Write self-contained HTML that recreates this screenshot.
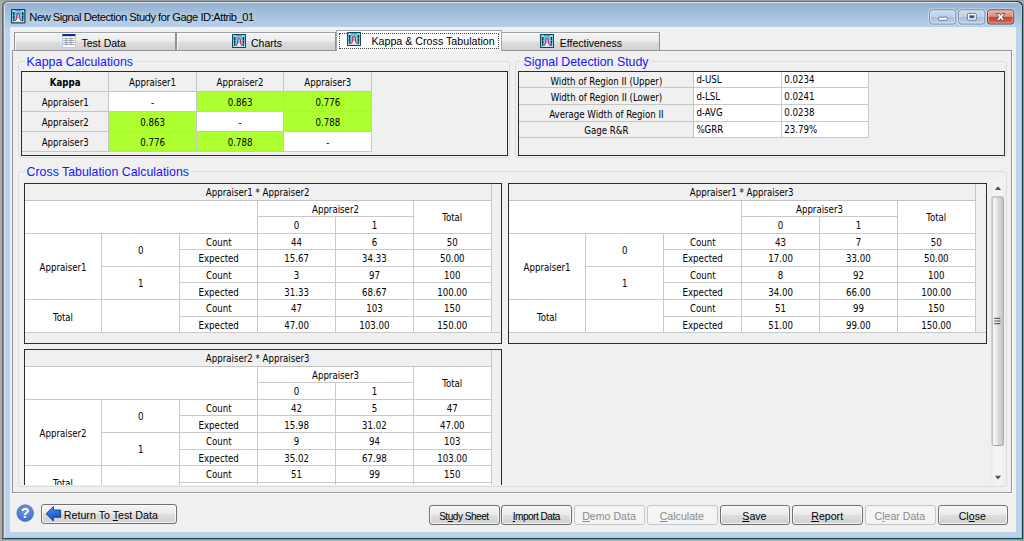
<!DOCTYPE html>
<html lang="en"><head><meta charset="utf-8"><title>New Signal Detection Study</title>
<style>
html,body{margin:0;padding:0;}
body{width:1024px;height:541px;overflow:hidden;background:#acacac;position:relative;font-family:"Liberation Sans",Arial,sans-serif;font-size:10.6px;color:#000;}
.abs{position:absolute;}
#topsh{position:absolute;left:0;top:0;width:1024px;height:1px;background:#a0a0a0;}
#botsh{position:absolute;left:2px;top:539px;width:1022px;height:1px;background:#918e8e;}
#rsh{position:absolute;left:1023px;top:4px;width:1px;height:536px;background:#999797;}
#frame{position:absolute;left:2px;top:1px;width:1021px;height:538px;background:linear-gradient(90deg,#696967 0,#6b6b6b 90%,#4a5558 97%,#15383f 100%);border-radius:5.5px 5.5px 0 0;}
#frameb{position:absolute;left:2px;top:538px;width:1021px;height:1px;background:linear-gradient(90deg,#3a5558 0,#0f4a52 8px,#0f4a52 100%);}
#framel{position:absolute;left:3px;top:5px;width:1px;height:533px;background:#878a90;}
#frame2{position:absolute;left:4px;top:2px;width:1017px;height:536px;border-radius:4.2px 4.2px 0 0;background:linear-gradient(#d8e4f2,#d7e6f6 4px,#d7e6f6);}
#cyanr{position:absolute;left:1021px;top:5px;width:1px;height:533px;background:linear-gradient(#a9d9f2,#86d9f4 24px,#7fd9f5 100%);}
#cyanb{position:absolute;left:3px;top:537px;width:1019px;height:1px;background:#80daf1;}
#frame3{position:absolute;left:5px;top:3px;width:1016px;height:534px;border-radius:3.2px 3.2px 0 0;background:linear-gradient(#94b1d1 0px,#b6cfe9 23.5px,#bcd2eb 26px,#bcd2eb 100%);}
#client{position:absolute;left:10px;top:27px;width:1006px;height:505px;background:#f0f0f0;}
#title{position:absolute;left:29.3px;top:9.7px;font-size:11.2px;white-space:nowrap;letter-spacing:-0.48px;color:#000;line-height:15px;text-shadow:0 0 5px rgba(255,255,255,.55),0 0 9px rgba(255,255,255,.35);}
.cbtn{position:absolute;top:9.3px;height:15.7px;border-radius:3px;box-sizing:border-box;border:1px solid #6f829b;box-shadow:inset 0 0 0 1px rgba(255,255,255,.45);}
.cbtn.n{background:linear-gradient(#c5d8ee 0,#bdd2ea 48%,#a9c2e0 52%,#b6cde8 100%);}
.cbtn.x{background:linear-gradient(#e7a99b 0,#d98a78 45%,#c6452a 52%,#d0644a 100%);border-color:#6b3a3a;}
/* tabs */
.tab{position:absolute;top:32.3px;height:18.2px;box-sizing:border-box;border:1px solid #909298;border-top-color:#9fa1a6;border-bottom:none;box-shadow:inset 1px 1px 0 rgba(255,255,255,.75);background:linear-gradient(#f3f3f3 0,#ececec 48%,#dddddd 52%,#d1d1d1 100%);white-space:nowrap;}
.tab.sel{top:30.4px;height:21px;background:linear-gradient(#fff 0,#fff 75%,#f3f3f3 100%);border-color:#a2a4a9;z-index:3;box-shadow:none;}
.tab .lbl{position:absolute;top:3.3px;line-height:13px;font-size:10.5px;}
#panel{position:absolute;left:12.4px;top:50.2px;width:999.6px;height:442.9px;box-sizing:border-box;border:1px solid #95979d;background:#f0f0f0;z-index:2;box-shadow:1px 1px 0 #fff;}
.gb{position:absolute;box-sizing:border-box;border:1px solid #d9dee3;border-radius:3px;z-index:4;}
.gbt{position:absolute;z-index:5;background:#f0f0f0;color:#1515ff;font-size:12.35px;line-height:14px;white-space:nowrap;padding:0 2px;}
.grid{position:absolute;box-sizing:border-box;border:1px solid #2b2b2b;background:#f0f0f0;z-index:6;overflow:hidden;}
.c{position:absolute;box-sizing:border-box;border-right:1px solid #c9c9c9;border-bottom:1px solid #c9c9c9;background:#fff;font-family:"DejaVu Sans Condensed","Liberation Sans",sans-serif;font-size:9.6px;text-align:center;white-space:nowrap;overflow:hidden;display:flex;align-items:center;justify-content:center;}
.c.h{background:#f0f0f0;border-color:#c4c4c4;}
.c.g{background:#adff2f;}
.c.l{justify-content:flex-start;padding-left:2px;}
.c span{position:relative;}
.btn{position:absolute;top:504.6px;height:20px;box-sizing:border-box;border:1px solid #707070;border-radius:3px;background:linear-gradient(#f4f4f4 0,#ebebeb 48%,#dedede 52%,#d0d0d0 100%);box-shadow:inset 0 0 0 1px rgba(255,255,255,.7);text-align:center;line-height:21.4px;font-size:10.6px;padding-right:1px;white-space:nowrap;z-index:6;}
.btn.dis{border-color:#c3c7cb;background:#f4f4f4;color:#8a8a8a;box-shadow:none;}
.btn.nar{font-size:10.1px;letter-spacing:-0.5px;}
u{text-decoration:underline;text-underline-offset:1px;}
</style></head>
<body>
<div id="topsh"></div><div id="botsh"></div><div id="rsh"></div><div id="frame"></div><div id="frameb"></div><div id="framel"></div><div id="frame2"></div><div id="cyanr"></div><div id="cyanb"></div><div id="frame3"></div>
<svg class="abs" style="left:11.1px;top:9.3px;z-index:7" width="14.5" height="14.5" viewBox="0 0 16 16">
<defs><linearGradient id="ig" x1="0" y1="0" x2="0" y2="1"><stop offset="0" stop-color="#4fbdf2"/><stop offset="0.55" stop-color="#7fd4fb"/><stop offset="1" stop-color="#c4ecff"/></linearGradient></defs>
<rect x="0.65" y="0.65" width="14.7" height="14.7" rx="0.5" fill="url(#ig)" stroke="#0b4954" stroke-width="1.3"/>
<rect x="2.4" y="2.6" width="1.5" height="11.4" fill="#062f38"/><rect x="12.1" y="2.6" width="1.5" height="11.4" fill="#062f38"/>
<rect x="1.7" y="1.7" width="2.9" height="1.3" fill="#fff"/><rect x="11.4" y="1.7" width="2.9" height="1.3" fill="#fff"/>
<rect x="1.7" y="13.4" width="2.9" height="1" fill="#d4f0fb"/><rect x="11.4" y="13.4" width="2.9" height="1" fill="#d4f0fb"/>
<path d="M1.4 7.2H14.6M1.4 11.4H14.6" stroke="#e6f7ff" stroke-width="0.8" stroke-dasharray="1.1 1.1" opacity="0.75"/><ellipse cx="8" cy="12" rx="3.2" ry="1.6" fill="#e9f8ff" opacity="0.8"/>
<path d="M4 12.8 C5.5 12.3 6.2 11.2 6.3 9.4 L6.3 7.1 C6.3 5.2 7.1 4.8 7.9 4.8 C8.7 4.8 9.5 5.2 9.5 7.1 L9.5 9.4 C9.6 11.2 10.3 12.3 11.9 12.8" fill="none" stroke="#d32630" stroke-width="1.25"/>
</svg>
<div id="title">New Signal Detection Study for Gage ID:Attrib_01</div>
<svg class="abs" style="left:924px;top:4px;z-index:7" width="96" height="26" viewBox="924 4 96 26">
<defs>
<linearGradient id="cbn" x1="0" y1="0" x2="0" y2="1"><stop offset="0" stop-color="#c9daef"/><stop offset="0.47" stop-color="#bfd3ea"/><stop offset="0.53" stop-color="#a7c0de"/><stop offset="1" stop-color="#bcd2ea"/></linearGradient>
<linearGradient id="cbx" x1="0" y1="0" x2="0" y2="1"><stop offset="0" stop-color="#e9b0a3"/><stop offset="0.46" stop-color="#dc8d7b"/><stop offset="0.54" stop-color="#c4442a"/><stop offset="1" stop-color="#d2705a"/></linearGradient>
</defs>
<g fill="none" stroke="#d5e3f3" stroke-width="1" opacity="0.8"><rect x="928.6" y="8.9" width="28.1" height="16.1" rx="3.4"/><rect x="957.7" y="8.9" width="28.1" height="16.1" rx="3.4"/><rect x="986.5" y="8.9" width="28.3" height="16.1" rx="3.4"/></g>
<rect x="929.6" y="9.9" width="26.1" height="14.1" rx="2.6" fill="url(#cbn)" stroke="#7b8ca6" stroke-width="1"/>
<rect x="958.7" y="9.9" width="26.1" height="14.1" rx="2.6" fill="url(#cbn)" stroke="#7b8ca6" stroke-width="1"/>
<rect x="987.5" y="9.9" width="26.3" height="14.1" rx="2.6" fill="url(#cbx)" stroke="#6d3f4c" stroke-width="1"/>
<g fill="none" stroke="#ffffff" stroke-opacity="0.45" stroke-width="0.9"><rect x="930.6" y="10.9" width="24.1" height="12.1" rx="1.8"/><rect x="959.7" y="10.9" width="24.1" height="12.1" rx="1.8"/><rect x="988.5" y="10.9" width="24.3" height="12.1" rx="1.8"/></g>
<rect x="938.6" y="17.1" width="8.7" height="3.3" rx="0.8" fill="#fbfbfb" stroke="#555e70" stroke-width="0.8"/>
<rect x="967.4" y="13.4" width="8.9" height="6.8" rx="0.9" fill="#fbfbfb" stroke="#555e70" stroke-width="0.8"/>
<rect x="969.7" y="15.5" width="4.4" height="2.5" fill="#3c4f74" stroke="#6b7890" stroke-width="0.5"/>
<path d="M996.3 13.4 L999.3 13.4 L1000.6 15.3 L1001.9 13.4 L1004.9 13.4 L1002.3 16.9 L1004.9 20.4 L1001.9 20.4 L1000.6 18.5 L999.3 20.4 L996.3 20.4 L998.9 16.9 Z" fill="#fbfbfb" stroke="#5a3d44" stroke-width="0.8" stroke-linejoin="round"/>
</svg>
<div id="client"></div>
<div class="tab" style="left:14.2px;width:161.4px"><svg class="abs" style="left:47px;top:1px" width="13.8" height="13.8" viewBox="0 0 14 14">
<rect x="0.4" y="0.4" width="13.2" height="13.2" fill="#fff" stroke="#b8c4e6" stroke-width="0.8"/>
<rect x="0.4" y="0" width="13.2" height="2.2" fill="#0a2da0"/>
<path d="M1.2 4.7H12.8M1.2 6.7H12.8M1.2 8.7H12.8M1.2 10.6H12.8" stroke="#9c9c9c" stroke-width="0.9"/>
<path d="M4.4 3.8V11.4M8.9 3.8V11.4" stroke="#8a8fb0" stroke-width="1.6" opacity="0.55"/>
</svg><span class="lbl" style="left:66.3px">Test Data</span></div>
<div class="tab" style="left:176px;width:160.4px"><svg class="abs" style="left:55px;top:0.9px;z-index:1" width="14.2" height="14.2" viewBox="0 0 16 16">
<defs><linearGradient id="ig" x1="0" y1="0" x2="0" y2="1"><stop offset="0" stop-color="#4fbdf2"/><stop offset="0.55" stop-color="#7fd4fb"/><stop offset="1" stop-color="#c4ecff"/></linearGradient></defs>
<rect x="0.65" y="0.65" width="14.7" height="14.7" rx="0.5" fill="url(#ig)" stroke="#0b4954" stroke-width="1.3"/>
<rect x="2.4" y="2.6" width="1.5" height="11.4" fill="#062f38"/><rect x="12.1" y="2.6" width="1.5" height="11.4" fill="#062f38"/>
<rect x="1.7" y="1.7" width="2.9" height="1.3" fill="#fff"/><rect x="11.4" y="1.7" width="2.9" height="1.3" fill="#fff"/>
<rect x="1.7" y="13.4" width="2.9" height="1" fill="#d4f0fb"/><rect x="11.4" y="13.4" width="2.9" height="1" fill="#d4f0fb"/>
<path d="M1.4 7.2H14.6M1.4 11.4H14.6" stroke="#e6f7ff" stroke-width="0.8" stroke-dasharray="1.1 1.1" opacity="0.75"/><ellipse cx="8" cy="12" rx="3.2" ry="1.6" fill="#e9f8ff" opacity="0.8"/>
<path d="M4 12.8 C5.5 12.3 6.2 11.2 6.3 9.4 L6.3 7.1 C6.3 5.2 7.1 4.8 7.9 4.8 C8.7 4.8 9.5 5.2 9.5 7.1 L9.5 9.4 C9.6 11.2 10.3 12.3 11.9 12.8" fill="none" stroke="#d32630" stroke-width="1.25"/>
</svg><span class="lbl" style="left:74px">Charts</span></div>
<div class="tab" style="left:499.6px;width:160.4px"><svg class="abs" style="left:39.4px;top:0.9px;z-index:1" width="14.2" height="14.2" viewBox="0 0 16 16">
<defs><linearGradient id="ig" x1="0" y1="0" x2="0" y2="1"><stop offset="0" stop-color="#4fbdf2"/><stop offset="0.55" stop-color="#7fd4fb"/><stop offset="1" stop-color="#c4ecff"/></linearGradient></defs>
<rect x="0.65" y="0.65" width="14.7" height="14.7" rx="0.5" fill="url(#ig)" stroke="#0b4954" stroke-width="1.3"/>
<rect x="2.4" y="2.6" width="1.5" height="11.4" fill="#062f38"/><rect x="12.1" y="2.6" width="1.5" height="11.4" fill="#062f38"/>
<rect x="1.7" y="1.7" width="2.9" height="1.3" fill="#fff"/><rect x="11.4" y="1.7" width="2.9" height="1.3" fill="#fff"/>
<rect x="1.7" y="13.4" width="2.9" height="1" fill="#d4f0fb"/><rect x="11.4" y="13.4" width="2.9" height="1" fill="#d4f0fb"/>
<path d="M1.4 7.2H14.6M1.4 11.4H14.6" stroke="#e6f7ff" stroke-width="0.8" stroke-dasharray="1.1 1.1" opacity="0.75"/><ellipse cx="8" cy="12" rx="3.2" ry="1.6" fill="#e9f8ff" opacity="0.8"/>
<path d="M4 12.8 C5.5 12.3 6.2 11.2 6.3 9.4 L6.3 7.1 C6.3 5.2 7.1 4.8 7.9 4.8 C8.7 4.8 9.5 5.2 9.5 7.1 L9.5 9.4 C9.6 11.2 10.3 12.3 11.9 12.8" fill="none" stroke="#d32630" stroke-width="1.25"/>
</svg><span class="lbl" style="left:59.2px">Effectiveness</span></div>
<div class="tab sel" style="left:336.2px;width:165.4px"><svg class="abs" style="left:9.7px;top:0.7px;z-index:1" width="14.2" height="14.2" viewBox="0 0 16 16">
<defs><linearGradient id="ig" x1="0" y1="0" x2="0" y2="1"><stop offset="0" stop-color="#4fbdf2"/><stop offset="0.55" stop-color="#7fd4fb"/><stop offset="1" stop-color="#c4ecff"/></linearGradient></defs>
<rect x="0.65" y="0.65" width="14.7" height="14.7" rx="0.5" fill="url(#ig)" stroke="#0b4954" stroke-width="1.3"/>
<rect x="2.4" y="2.6" width="1.5" height="11.4" fill="#062f38"/><rect x="12.1" y="2.6" width="1.5" height="11.4" fill="#062f38"/>
<rect x="1.7" y="1.7" width="2.9" height="1.3" fill="#fff"/><rect x="11.4" y="1.7" width="2.9" height="1.3" fill="#fff"/>
<rect x="1.7" y="13.4" width="2.9" height="1" fill="#d4f0fb"/><rect x="11.4" y="13.4" width="2.9" height="1" fill="#d4f0fb"/>
<path d="M1.4 7.2H14.6M1.4 11.4H14.6" stroke="#e6f7ff" stroke-width="0.8" stroke-dasharray="1.1 1.1" opacity="0.75"/><ellipse cx="8" cy="12" rx="3.2" ry="1.6" fill="#e9f8ff" opacity="0.8"/>
<path d="M4 12.8 C5.5 12.3 6.2 11.2 6.3 9.4 L6.3 7.1 C6.3 5.2 7.1 4.8 7.9 4.8 C8.7 4.8 9.5 5.2 9.5 7.1 L9.5 9.4 C9.6 11.2 10.3 12.3 11.9 12.8" fill="none" stroke="#d32630" stroke-width="1.25"/>
</svg><span class="lbl" style="left:34.2px;top:3.6px;font-size:10.7px">Kappa &amp; Cross Tabulation</span><div class="abs" style="left:1.4px;top:1.9px;width:160px;height:16.2px;border:1px dotted #444;box-sizing:border-box"></div></div>
<div id="panel"></div>
<div class="gb" style="left:18.4px;top:61px;width:491.2px;height:96.6px"></div>
<div class="gbt" style="left:24.6px;top:55.2px">Kappa Calculations</div>
<div class="gb" style="left:515.3px;top:61px;width:491.6px;height:96.6px"></div>
<div class="gbt" style="left:521.6px;top:55.2px">Signal Detection Study</div>
<div class="gb" style="left:18.4px;top:170.6px;width:988.5px;height:316px"></div>
<div class="gbt" style="left:24.6px;top:164.8px">Cross Tabulation Calculations</div>
<div class="grid" style="left:21.0px;top:71.3px;width:486.9px;height:84.3px">
<div class="c h" style="left:0.00px;top:0.20px;width:87.40px;height:19.50px"><span style="top:1.1px"><b>Kappa</b></span></div>
<div class="c h" style="left:87.40px;top:0.20px;width:87.40px;height:19.50px"><span style="top:1.1px">Appraiser1</span></div>
<div class="c h" style="left:174.80px;top:0.20px;width:87.60px;height:19.50px"><span style="top:1.1px">Appraiser2</span></div>
<div class="c h" style="left:262.40px;top:0.20px;width:87.90px;height:19.50px"><span style="top:1.1px">Appraiser3</span></div>
<div class="c h" style="left:0.00px;top:19.70px;width:87.40px;height:20.00px"><span style="top:1.0px">Appraiser1</span></div>
<div class="c " style="left:87.40px;top:19.70px;width:87.40px;height:20.00px"><span style="top:1.0px">-</span></div>
<div class="c g" style="left:174.80px;top:19.70px;width:87.60px;height:20.00px"><span style="top:1.0px">0.863</span></div>
<div class="c g" style="left:262.40px;top:19.70px;width:87.90px;height:20.00px"><span style="top:1.0px">0.776</span></div>
<div class="c h" style="left:0.00px;top:39.70px;width:87.40px;height:20.00px"><span style="top:1.0px">Appraiser2</span></div>
<div class="c g" style="left:87.40px;top:39.70px;width:87.40px;height:20.00px"><span style="top:1.0px">0.863</span></div>
<div class="c " style="left:174.80px;top:39.70px;width:87.60px;height:20.00px"><span style="top:1.0px">-</span></div>
<div class="c g" style="left:262.40px;top:39.70px;width:87.90px;height:20.00px"><span style="top:1.0px">0.788</span></div>
<div class="c h" style="left:0.00px;top:59.70px;width:87.40px;height:20.00px"><span style="top:1.0px">Appraiser3</span></div>
<div class="c g" style="left:87.40px;top:59.70px;width:87.40px;height:20.00px"><span style="top:1.0px">0.776</span></div>
<div class="c g" style="left:174.80px;top:59.70px;width:87.60px;height:20.00px"><span style="top:1.0px">0.788</span></div>
<div class="c " style="left:262.40px;top:59.70px;width:87.90px;height:20.00px"><span style="top:1.0px">-</span></div>
</div>
<div class="grid" style="left:518.2px;top:71.3px;width:487.0999999999999px;height:84.3px">
<div class="c h" style="left:0.20px;top:0.20px;width:175.00px;height:15.60px"><span style="top:1.4px">Width of Region II (Upper)</span></div>
<div class="c l" style="left:175.20px;top:0.20px;width:87.90px;height:15.60px"><span style="top:0.1px">d-USL</span></div>
<div class="c l" style="left:263.10px;top:0.20px;width:86.70px;height:15.60px"><span style="top:0.1px">0.0234</span></div>
<div class="c h" style="left:0.20px;top:15.80px;width:175.00px;height:16.70px"><span style="top:1.4px">Width of Region II (Lower)</span></div>
<div class="c l" style="left:175.20px;top:15.80px;width:87.90px;height:16.70px"><span style="top:0.1px">d-LSL</span></div>
<div class="c l" style="left:263.10px;top:15.80px;width:86.70px;height:16.70px"><span style="top:0.1px">0.0241</span></div>
<div class="c h" style="left:0.20px;top:32.50px;width:175.00px;height:17.00px"><span style="top:1.4px">Average Width of Region II</span></div>
<div class="c l" style="left:175.20px;top:32.50px;width:87.90px;height:17.00px"><span style="top:0.1px">d-AVG</span></div>
<div class="c l" style="left:263.10px;top:32.50px;width:86.70px;height:17.00px"><span style="top:0.1px">0.0238</span></div>
<div class="c h" style="left:0.20px;top:49.50px;width:175.00px;height:16.40px"><span style="top:1.4px">Gage R&amp;R</span></div>
<div class="c l" style="left:175.20px;top:49.50px;width:87.90px;height:16.40px"><span style="top:0.1px">%GRR</span></div>
<div class="c l" style="left:263.10px;top:49.50px;width:86.70px;height:16.40px"><span style="top:0.1px">23.79%</span></div>
</div>
<div class="grid" style="left:23.6px;top:183.2px;width:478.6px;height:160.4px"><div class="c h" style="left:0.00px;top:0.00px;width:467.10px;height:16.60px"><span style="top:0.3px">Appraiser1 * Appraiser2</span></div><div class="abs" style="left:467.09999999999997px;top:0;width:9.500000000000057px;height:149.22px;border-bottom:1px solid #c9c9c9;box-sizing:border-box"></div><div class="c " style="left:0.00px;top:16.60px;width:233.55px;height:32.78px"></div><div class="c " style="left:233.55px;top:16.60px;width:155.70px;height:16.14px"><span style="top:0.8px">Appraiser2</span></div><div class="c " style="left:233.55px;top:32.74px;width:77.85px;height:16.64px"><span style="top:0.8px">0</span></div><div class="c " style="left:311.40px;top:32.74px;width:77.85px;height:16.64px"><span style="top:0.8px">1</span></div><div class="c " style="left:389.25px;top:16.60px;width:77.85px;height:32.78px"><span style="top:0.8px">Total</span></div><div class="c " style="left:0.00px;top:49.38px;width:77.85px;height:66.56px"><span style="top:0.8px">Appraiser1</span></div><div class="c " style="left:77.85px;top:49.38px;width:77.85px;height:33.28px"><span style="top:0.8px">0</span></div><div class="c " style="left:77.85px;top:82.66px;width:77.85px;height:33.28px"><span style="top:0.8px">1</span></div><div class="c " style="left:0.00px;top:115.94px;width:77.85px;height:33.28px"><span style="top:0.8px">Total</span></div><div class="c " style="left:77.85px;top:115.94px;width:77.85px;height:33.28px"></div><div class="c " style="left:155.70px;top:49.38px;width:77.85px;height:16.64px"><span style="top:0.8px">Count</span></div><div class="c " style="left:233.55px;top:49.38px;width:77.85px;height:16.64px"><span style="top:0.8px">44</span></div><div class="c " style="left:311.40px;top:49.38px;width:77.85px;height:16.64px"><span style="top:0.8px">6</span></div><div class="c " style="left:389.25px;top:49.38px;width:77.85px;height:16.64px"><span style="top:0.8px">50</span></div><div class="c " style="left:155.70px;top:66.02px;width:77.85px;height:16.64px"><span style="top:0.8px">Expected</span></div><div class="c " style="left:233.55px;top:66.02px;width:77.85px;height:16.64px"><span style="top:0.8px">15.67</span></div><div class="c " style="left:311.40px;top:66.02px;width:77.85px;height:16.64px"><span style="top:0.8px">34.33</span></div><div class="c " style="left:389.25px;top:66.02px;width:77.85px;height:16.64px"><span style="top:0.8px">50.00</span></div><div class="c " style="left:155.70px;top:82.66px;width:77.85px;height:16.64px"><span style="top:0.8px">Count</span></div><div class="c " style="left:233.55px;top:82.66px;width:77.85px;height:16.64px"><span style="top:0.8px">3</span></div><div class="c " style="left:311.40px;top:82.66px;width:77.85px;height:16.64px"><span style="top:0.8px">97</span></div><div class="c " style="left:389.25px;top:82.66px;width:77.85px;height:16.64px"><span style="top:0.8px">100</span></div><div class="c " style="left:155.70px;top:99.30px;width:77.85px;height:16.64px"><span style="top:0.8px">Expected</span></div><div class="c " style="left:233.55px;top:99.30px;width:77.85px;height:16.64px"><span style="top:0.8px">31.33</span></div><div class="c " style="left:311.40px;top:99.30px;width:77.85px;height:16.64px"><span style="top:0.8px">68.67</span></div><div class="c " style="left:389.25px;top:99.30px;width:77.85px;height:16.64px"><span style="top:0.8px">100.00</span></div><div class="c " style="left:155.70px;top:115.94px;width:77.85px;height:16.64px"><span style="top:0.8px">Count</span></div><div class="c " style="left:233.55px;top:115.94px;width:77.85px;height:16.64px"><span style="top:0.8px">47</span></div><div class="c " style="left:311.40px;top:115.94px;width:77.85px;height:16.64px"><span style="top:0.8px">103</span></div><div class="c " style="left:389.25px;top:115.94px;width:77.85px;height:16.64px"><span style="top:0.8px">150</span></div><div class="c " style="left:155.70px;top:132.58px;width:77.85px;height:16.64px"><span style="top:0.8px">Expected</span></div><div class="c " style="left:233.55px;top:132.58px;width:77.85px;height:16.64px"><span style="top:0.8px">47.00</span></div><div class="c " style="left:311.40px;top:132.58px;width:77.85px;height:16.64px"><span style="top:0.8px">103.00</span></div><div class="c " style="left:389.25px;top:132.58px;width:77.85px;height:16.64px"><span style="top:0.8px">150.00</span></div></div>
<div class="grid" style="left:507.6px;top:183.2px;width:479.8px;height:160.4px"><div class="c h" style="left:0.00px;top:0.00px;width:467.10px;height:16.60px"><span style="top:0.3px">Appraiser1 * Appraiser3</span></div><div class="abs" style="left:467.09999999999997px;top:0;width:10.700000000000045px;height:149.22px;border-bottom:1px solid #c9c9c9;box-sizing:border-box"></div><div class="c " style="left:0.00px;top:16.60px;width:233.55px;height:32.78px"></div><div class="c " style="left:233.55px;top:16.60px;width:155.70px;height:16.14px"><span style="top:0.8px">Appraiser3</span></div><div class="c " style="left:233.55px;top:32.74px;width:77.85px;height:16.64px"><span style="top:0.8px">0</span></div><div class="c " style="left:311.40px;top:32.74px;width:77.85px;height:16.64px"><span style="top:0.8px">1</span></div><div class="c " style="left:389.25px;top:16.60px;width:77.85px;height:32.78px"><span style="top:0.8px">Total</span></div><div class="c " style="left:0.00px;top:49.38px;width:77.85px;height:66.56px"><span style="top:0.8px">Appraiser1</span></div><div class="c " style="left:77.85px;top:49.38px;width:77.85px;height:33.28px"><span style="top:0.8px">0</span></div><div class="c " style="left:77.85px;top:82.66px;width:77.85px;height:33.28px"><span style="top:0.8px">1</span></div><div class="c " style="left:0.00px;top:115.94px;width:77.85px;height:33.28px"><span style="top:0.8px">Total</span></div><div class="c " style="left:77.85px;top:115.94px;width:77.85px;height:33.28px"></div><div class="c " style="left:155.70px;top:49.38px;width:77.85px;height:16.64px"><span style="top:0.8px">Count</span></div><div class="c " style="left:233.55px;top:49.38px;width:77.85px;height:16.64px"><span style="top:0.8px">43</span></div><div class="c " style="left:311.40px;top:49.38px;width:77.85px;height:16.64px"><span style="top:0.8px">7</span></div><div class="c " style="left:389.25px;top:49.38px;width:77.85px;height:16.64px"><span style="top:0.8px">50</span></div><div class="c " style="left:155.70px;top:66.02px;width:77.85px;height:16.64px"><span style="top:0.8px">Expected</span></div><div class="c " style="left:233.55px;top:66.02px;width:77.85px;height:16.64px"><span style="top:0.8px">17.00</span></div><div class="c " style="left:311.40px;top:66.02px;width:77.85px;height:16.64px"><span style="top:0.8px">33.00</span></div><div class="c " style="left:389.25px;top:66.02px;width:77.85px;height:16.64px"><span style="top:0.8px">50.00</span></div><div class="c " style="left:155.70px;top:82.66px;width:77.85px;height:16.64px"><span style="top:0.8px">Count</span></div><div class="c " style="left:233.55px;top:82.66px;width:77.85px;height:16.64px"><span style="top:0.8px">8</span></div><div class="c " style="left:311.40px;top:82.66px;width:77.85px;height:16.64px"><span style="top:0.8px">92</span></div><div class="c " style="left:389.25px;top:82.66px;width:77.85px;height:16.64px"><span style="top:0.8px">100</span></div><div class="c " style="left:155.70px;top:99.30px;width:77.85px;height:16.64px"><span style="top:0.8px">Expected</span></div><div class="c " style="left:233.55px;top:99.30px;width:77.85px;height:16.64px"><span style="top:0.8px">34.00</span></div><div class="c " style="left:311.40px;top:99.30px;width:77.85px;height:16.64px"><span style="top:0.8px">66.00</span></div><div class="c " style="left:389.25px;top:99.30px;width:77.85px;height:16.64px"><span style="top:0.8px">100.00</span></div><div class="c " style="left:155.70px;top:115.94px;width:77.85px;height:16.64px"><span style="top:0.8px">Count</span></div><div class="c " style="left:233.55px;top:115.94px;width:77.85px;height:16.64px"><span style="top:0.8px">51</span></div><div class="c " style="left:311.40px;top:115.94px;width:77.85px;height:16.64px"><span style="top:0.8px">99</span></div><div class="c " style="left:389.25px;top:115.94px;width:77.85px;height:16.64px"><span style="top:0.8px">150</span></div><div class="c " style="left:155.70px;top:132.58px;width:77.85px;height:16.64px"><span style="top:0.8px">Expected</span></div><div class="c " style="left:233.55px;top:132.58px;width:77.85px;height:16.64px"><span style="top:0.8px">51.00</span></div><div class="c " style="left:311.40px;top:132.58px;width:77.85px;height:16.64px"><span style="top:0.8px">99.00</span></div><div class="c " style="left:389.25px;top:132.58px;width:77.85px;height:16.64px"><span style="top:0.8px">150.00</span></div></div>
<div class="abs" style="left:21px;top:340px;width:486px;height:144.8px;overflow:hidden;z-index:6">
<div class="grid" style="left:2.6px;top:9.4px;width:478.6px;height:160.4px"><div class="c h" style="left:0.00px;top:0.00px;width:467.10px;height:16.60px"><span style="top:0.3px">Appraiser2 * Appraiser3</span></div><div class="abs" style="left:467.09999999999997px;top:0;width:9.500000000000057px;height:149.22px;border-bottom:1px solid #c9c9c9;box-sizing:border-box"></div><div class="c " style="left:0.00px;top:16.60px;width:233.55px;height:32.78px"></div><div class="c " style="left:233.55px;top:16.60px;width:155.70px;height:16.14px"><span style="top:0.8px">Appraiser3</span></div><div class="c " style="left:233.55px;top:32.74px;width:77.85px;height:16.64px"><span style="top:0.8px">0</span></div><div class="c " style="left:311.40px;top:32.74px;width:77.85px;height:16.64px"><span style="top:0.8px">1</span></div><div class="c " style="left:389.25px;top:16.60px;width:77.85px;height:32.78px"><span style="top:0.8px">Total</span></div><div class="c " style="left:0.00px;top:49.38px;width:77.85px;height:66.56px"><span style="top:0.8px">Appraiser2</span></div><div class="c " style="left:77.85px;top:49.38px;width:77.85px;height:33.28px"><span style="top:0.8px">0</span></div><div class="c " style="left:77.85px;top:82.66px;width:77.85px;height:33.28px"><span style="top:0.8px">1</span></div><div class="c " style="left:0.00px;top:115.94px;width:77.85px;height:33.28px"><span style="top:0.8px">Total</span></div><div class="c " style="left:77.85px;top:115.94px;width:77.85px;height:33.28px"></div><div class="c " style="left:155.70px;top:49.38px;width:77.85px;height:16.64px"><span style="top:0.8px">Count</span></div><div class="c " style="left:233.55px;top:49.38px;width:77.85px;height:16.64px"><span style="top:0.8px">42</span></div><div class="c " style="left:311.40px;top:49.38px;width:77.85px;height:16.64px"><span style="top:0.8px">5</span></div><div class="c " style="left:389.25px;top:49.38px;width:77.85px;height:16.64px"><span style="top:0.8px">47</span></div><div class="c " style="left:155.70px;top:66.02px;width:77.85px;height:16.64px"><span style="top:0.8px">Expected</span></div><div class="c " style="left:233.55px;top:66.02px;width:77.85px;height:16.64px"><span style="top:0.8px">15.98</span></div><div class="c " style="left:311.40px;top:66.02px;width:77.85px;height:16.64px"><span style="top:0.8px">31.02</span></div><div class="c " style="left:389.25px;top:66.02px;width:77.85px;height:16.64px"><span style="top:0.8px">47.00</span></div><div class="c " style="left:155.70px;top:82.66px;width:77.85px;height:16.64px"><span style="top:0.8px">Count</span></div><div class="c " style="left:233.55px;top:82.66px;width:77.85px;height:16.64px"><span style="top:0.8px">9</span></div><div class="c " style="left:311.40px;top:82.66px;width:77.85px;height:16.64px"><span style="top:0.8px">94</span></div><div class="c " style="left:389.25px;top:82.66px;width:77.85px;height:16.64px"><span style="top:0.8px">103</span></div><div class="c " style="left:155.70px;top:99.30px;width:77.85px;height:16.64px"><span style="top:0.8px">Expected</span></div><div class="c " style="left:233.55px;top:99.30px;width:77.85px;height:16.64px"><span style="top:0.8px">35.02</span></div><div class="c " style="left:311.40px;top:99.30px;width:77.85px;height:16.64px"><span style="top:0.8px">67.98</span></div><div class="c " style="left:389.25px;top:99.30px;width:77.85px;height:16.64px"><span style="top:0.8px">103.00</span></div><div class="c " style="left:155.70px;top:115.94px;width:77.85px;height:16.64px"><span style="top:0.8px">Count</span></div><div class="c " style="left:233.55px;top:115.94px;width:77.85px;height:16.64px"><span style="top:0.8px">51</span></div><div class="c " style="left:311.40px;top:115.94px;width:77.85px;height:16.64px"><span style="top:0.8px">99</span></div><div class="c " style="left:389.25px;top:115.94px;width:77.85px;height:16.64px"><span style="top:0.8px">150</span></div><div class="c " style="left:155.70px;top:132.58px;width:77.85px;height:16.64px"><span style="top:0.8px">Expected</span></div><div class="c " style="left:233.55px;top:132.58px;width:77.85px;height:16.64px"><span style="top:0.8px">51.00</span></div><div class="c " style="left:311.40px;top:132.58px;width:77.85px;height:16.64px"><span style="top:0.8px">99.00</span></div><div class="c " style="left:389.25px;top:132.58px;width:77.85px;height:16.64px"><span style="top:0.8px">150.00</span></div></div>
</div>
<svg class="abs" style="left:988px;top:180px;z-index:7" width="20" height="308" viewBox="988 180 20 308">
<defs><linearGradient id="sbt" x1="0" y1="0" x2="1" y2="0"><stop offset="0" stop-color="#f6f6f6"/><stop offset="0.45" stop-color="#e9e9ea"/><stop offset="0.55" stop-color="#d7d7d9"/><stop offset="1" stop-color="#c8c8cb"/></linearGradient>
<linearGradient id="sbk" x1="0" y1="0" x2="1" y2="0"><stop offset="0" stop-color="#e9e9e9"/><stop offset="0.2" stop-color="#f3f3f3"/><stop offset="0.8" stop-color="#f5f5f5"/><stop offset="1" stop-color="#ebebeb"/></linearGradient></defs>
<rect x="991.2" y="181.6" width="13" height="303" fill="url(#sbk)"/>
<path d="M994.9 190.1 L998 186.3 L1001.1 190.1 Z" fill="#505050"/>
<path d="M994.9 475.8 L998 479.6 L1001.1 475.8 Z" fill="#505050"/>
<rect x="992.1" y="196.9" width="11.2" height="248.6" rx="1.6" fill="url(#sbt)" stroke="#a3a3a6" stroke-width="1"/>
<path d="M994.3 318.4H1000.4M994.3 321H1000.4M994.3 323.6H1000.4" stroke="#5f5f5f" stroke-width="1.1"/>
</svg>
<svg class="abs" style="left:15.5px;top:503.8px;z-index:6" width="18.4" height="18.4" viewBox="0 0 18.4 18.4">
<defs><radialGradient id="hg" cx="0.5" cy="0.3" r="0.75"><stop offset="0" stop-color="#739de6"/><stop offset="0.7" stop-color="#4b79d0"/><stop offset="1" stop-color="#3c68c0"/></radialGradient></defs>
<circle cx="9.2" cy="9.2" r="8.35" fill="url(#hg)" stroke="#4571c8" stroke-width="0.7"/>
<text x="9.2" y="14.3" text-anchor="middle" font-family="Liberation Sans, Arial, sans-serif" font-weight="bold" font-size="14.4" fill="#fdfdff">?</text></svg>
<div class="btn" style="left:41px;width:136px;top:504.4px;height:20px;text-align:left">
<svg class="abs" style="left:3.4px;top:1px" width="16.4" height="15.8" viewBox="0 0 16.4 15.8"><defs><linearGradient id="ag" x1="0" y1="0" x2="0.3" y2="1"><stop offset="0" stop-color="#64a6f6"/><stop offset="0.5" stop-color="#2d74e0"/><stop offset="1" stop-color="#194cae"/></linearGradient></defs>
<path d="M1.1 7.7 L8.4 0.6 L8.4 4 L15.7 4 L15.7 11.3 L8.4 11.3 L8.4 15.1 Z" fill="url(#ag)" stroke="#153c92" stroke-width="0.9" stroke-linejoin="round"/></svg>
<span class="abs" style="left:21.8px;top:-0.4px;font-size:10.7px">Return To <u>T</u>est Data</span></div>
<div class="btn nar" style="left:429.2px;width:70.40000000000003px">St<u>u</u>dy Sheet</div>
<div class="btn nar" style="left:501.4px;width:70.80000000000007px"><u>I</u>mport Data</div>
<div class="btn dis" style="left:574.2px;width:70.59999999999991px"><u>D</u>emo Data</div>
<div class="btn dis" style="left:647px;width:70.60000000000002px"><u>C</u>alculate</div>
<div class="btn " style="left:719.6px;width:70.60000000000002px"><u>S</u>ave</div>
<div class="btn " style="left:792.4px;width:70.60000000000002px"><u>R</u>eport</div>
<div class="btn dis" style="left:865px;width:70.60000000000002px">C<u>l</u>ear Data</div>
<div class="btn " style="left:937.6px;width:70.39999999999998px">Cl<u>o</u>se</div>
</body></html>
